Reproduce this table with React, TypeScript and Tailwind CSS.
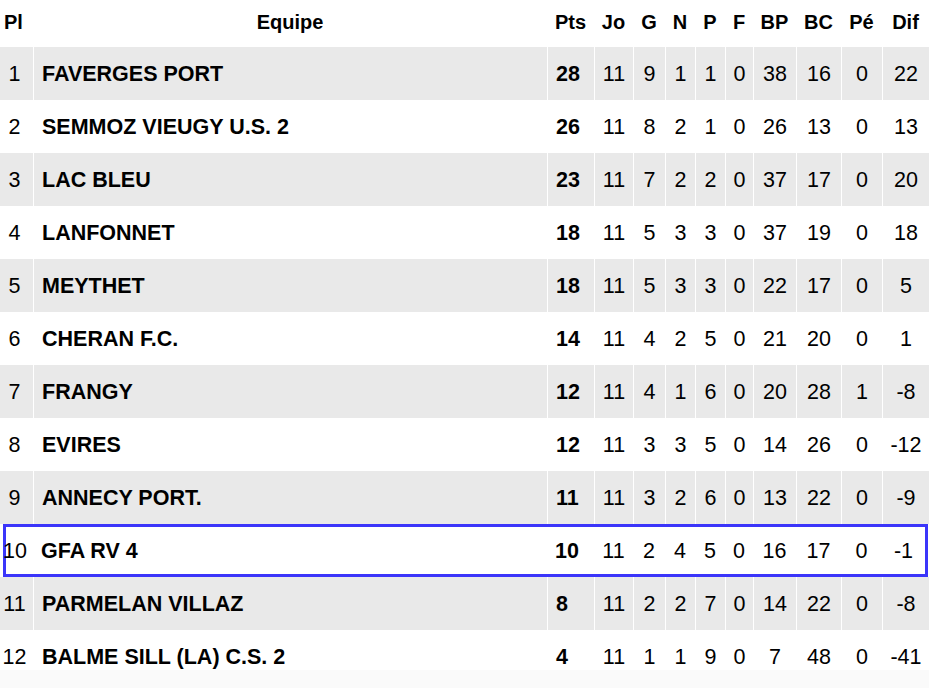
import React from "react";

type Row = [number, string, number, number, number, number, number, number, number, number, number, number];

const rows: Row[] = [
  [1, "FAVERGES PORT", 28, 11, 9, 1, 1, 0, 38, 16, 0, 22],
  [2, "SEMMOZ VIEUGY U.S. 2", 26, 11, 8, 2, 1, 0, 26, 13, 0, 13],
  [3, "LAC BLEU", 23, 11, 7, 2, 2, 0, 37, 17, 0, 20],
  [4, "LANFONNET", 18, 11, 5, 3, 3, 0, 37, 19, 0, 18],
  [5, "MEYTHET", 18, 11, 5, 3, 3, 0, 22, 17, 0, 5],
  [6, "CHERAN F.C.", 14, 11, 4, 2, 5, 0, 21, 20, 0, 1],
  [7, "FRANGY", 12, 11, 4, 1, 6, 0, 20, 28, 1, -8],
  [8, "EVIRES", 12, 11, 3, 3, 5, 0, 14, 26, 0, -12],
  [9, "ANNECY PORT.", 11, 11, 3, 2, 6, 0, 13, 22, 0, -9],
  [10, "GFA RV 4", 10, 11, 2, 4, 5, 0, 16, 17, 0, -1],
  [11, "PARMELAN VILLAZ", 8, 11, 2, 2, 7, 0, 14, 22, 0, -8],
  [12, "BALME SILL (LA) C.S. 2", 4, 11, 1, 1, 9, 0, 7, 48, 0, -41],
];

const headers = ["Pl", "Equipe", "Pts", "Jo", "G", "N", "P", "F", "BP", "BC", "Pé", "Dif"];

const COLS = "grid-cols-[33px_514px_47px_39px_32px_30px_30px_28px_43px_45px_41px_47px]";

function Cells({ r, gray }: { r: Row; gray: boolean }) {
  const sep = gray ? "border-l border-white" : "border-l border-transparent";
  return (
    <>
      <div className="flex items-center justify-center pr-[4px] pt-[2px]">{r[0]}</div>
      <div className={`flex items-center pl-2 pt-[2px] font-bold ${sep}`}>{r[1]}</div>
      <div className={`flex items-center pl-2 pt-[2px] font-bold ${sep}`}>{r[2]}</div>
      {r.slice(3).map((v, i) => (
        <div key={i} className={`flex items-center justify-center pt-[2px] ${sep}`}>
          {v}
        </div>
      ))}
    </>
  );
}

export default function App() {
  return (
    <div className="w-[929px] h-[688px] bg-[#fafafa] overflow-hidden font-['Liberation_Sans',Arial,sans-serif] text-black">
      <div className={`grid ${COLS} h-[47px] bg-white text-[20px] font-bold`}>
        {headers.map((h, i) => (
          <div
            key={h}
            className={`flex items-center pb-[3px] ${i === 0 ? "pl-1" : "justify-center"}`}
          >
            {h}
          </div>
        ))}
      </div>
      {rows.map((r, idx) => {
        const gray = idx % 2 === 0;
        if (r[0] === 10) {
          return (
            <div key={idx} className="h-[53px] bg-white pl-[3px] pr-px text-[21.5px]">
              <div className="grid grid-cols-[27px_514px_47px_39px_32px_30px_30px_28px_43px_45px_41px_43px] h-full border-[3px] border-[#3b35fa]">
                <div className="flex items-center justify-center pr-[9px] pt-[2px]">{r[0]}</div>
                <div className="flex items-center pl-2 pt-[2px] font-bold">{r[1]}</div>
                <div className="flex items-center pl-2 pt-[2px] font-bold">{r[2]}</div>
                {r.slice(3).map((v, i) => (
                  <div key={i} className="flex items-center justify-center pt-[2px]">
                    {v}
                  </div>
                ))}
              </div>
            </div>
          );
        }
        const last = idx === rows.length - 1;
        return (
          <div
            key={idx}
            className={`grid ${COLS} h-[53px] text-[21.5px] ${
              gray
                ? "bg-[#e9e9e9]"
                : last
                ? "bg-[linear-gradient(to_bottom,#ffffff_40px,#fafafa_40px)]"
                : "bg-white"
            }`}
          >
            <Cells r={r} gray={gray} />
          </div>
        );
      })}
    </div>
  );
}
